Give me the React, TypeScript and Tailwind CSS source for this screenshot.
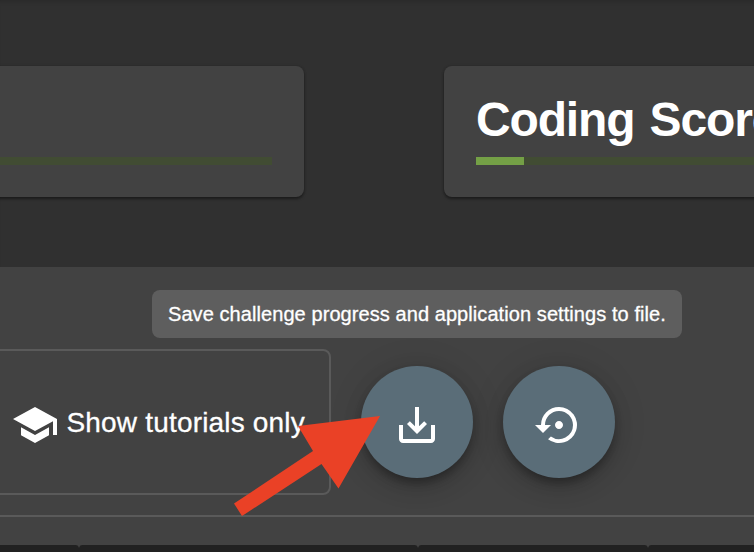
import type { ReactNode } from "react";
import { MdSaveAlt, MdSchool, MdSettingsBackupRestore } from "react-icons/md";

function ScoreCard({ title, className, progress }: { title?: string; className: string; progress?: boolean }) {
  return (
    <section className={`${className} h-[131px] shrink-0 rounded-lg bg-[#424242] px-8 shadow-[0_2px_3px_rgba(0,0,0,0.4),0_0_3px_rgba(0,0,0,0.15)]`}>
      <h1 className="h-[91px] whitespace-nowrap pt-[26px] text-[48px] leading-[56px] font-bold tracking-[-1.15px] [word-spacing:3px]">{title}</h1>
      <div className="h-2 bg-[#414c33]">{progress && <div className="h-2 w-12 bg-[#74a046]" />}</div>
    </section>
  );
}

function RoundButton({ label, children }: { label: string; children: ReactNode }) {
  return (
    <button
      aria-label={label}
      className="flex size-28 shrink-0 items-center justify-center rounded-full bg-[#5a6d78] pt-[6px] shadow-[0_6px_10px_-2px_rgba(0,0,0,0.3),0_8px_20px_rgba(0,0,0,0.15),0_2px_36px_rgba(0,0,0,0.1)]"
    >
      {children}
    </button>
  );
}

function Notch() {
  return (
    <svg width="6" height="3" viewBox="0 0 6 3" className="shrink-0">
      <path d="M0 0h6Q3.5 .2 3 3Q2.5 .2 0 0Z" fill="#424242" />
    </svg>
  );
}

export default function App() {
  return (
    <main className="relative flex h-[552px] w-[754px] flex-col overflow-hidden bg-[#424242] font-['Liberation_Sans',Arial,sans-serif] text-white">
      <header className="flex h-[267px] shrink-0 gap-[140px] bg-[#303030] pt-[66px] shadow-[inset_0_5px_5px_-4px_rgba(0,0,0,0.18)]">
        <ScoreCard className="-ml-[116px] w-[420px]" />
        <ScoreCard title="Coding Score" className="w-[420px]" progress />
      </header>

      <div className="flex h-[250px] shrink-0 border-b-2 border-[#5a5a5a] pt-[82px]">
        <div className="-ml-2 flex h-[146px] w-[339px] shrink-0 items-center rounded-lg border-2 border-[#5a5a5a] pl-[17px]">
          <MdSchool size={48} className="mt-1.5 shrink-0" />
          <span className="ml-[7.5px] mt-0.5 whitespace-nowrap text-[28px] tracking-[0.18px] [-webkit-text-stroke:0.3px_white]">Show tutorials only</span>
        </div>
        <div className="ml-[30px] flex gap-[30px] pt-[17px]">
          <RoundButton label="Save progress">
            <MdSaveAlt size={48} />
          </RoundButton>
          <RoundButton label="Restore progress">
            <MdSettingsBackupRestore size={48} />
          </RoundButton>
        </div>
      </div>

      <div className="h-7 shrink-0" />
      <footer className="flex h-[7px] bg-[#212121] pl-[76px]">
        <Notch />
        <div className="w-[333px]" />
        <Notch />
        <div className="w-[224px]" />
        <Notch />
      </footer>

      <div role="tooltip" className="absolute top-[290px] left-[152px] flex h-12 w-[530px] items-center rounded-lg bg-[#5e5e5e] px-4 text-[20px] tracking-[0.075px] whitespace-nowrap [-webkit-text-stroke:0.3px_white]">
        Save challenge progress and application settings to file.
      </div>
      <svg className="pointer-events-none absolute top-[415px] left-[233px]" width="148" height="102" viewBox="233 415 148 102" aria-hidden="true">
        <path d="M380 416L338.5 488.5L321.5 464L242 516L234 503.5L313 451L298 426Z" fill="#ea4126" />
      </svg>
    </main>
  );
}
